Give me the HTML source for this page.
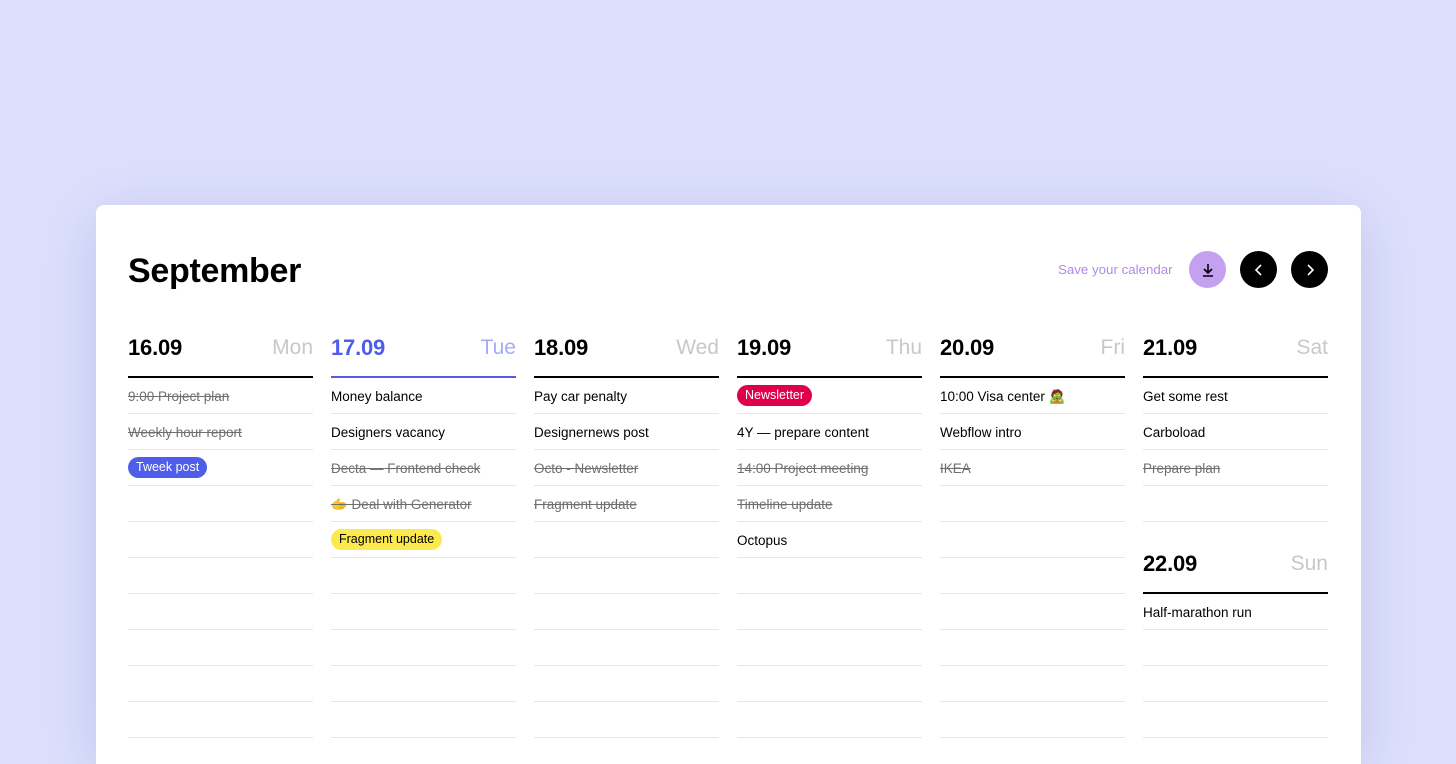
<!DOCTYPE html>
<html><head><meta charset="utf-8"><style>
*{margin:0;padding:0;box-sizing:border-box}
html,body{width:1456px;height:764px;overflow:hidden}
body{background:#dde0fc;font-family:"Liberation Sans",Arial,sans-serif;position:relative}
.card{position:absolute;left:96px;top:205px;width:1265px;height:559px;background:#fff;border-radius:8px 8px 0 0;box-shadow:0 10px 60px rgba(120,125,200,0.28)}
h1{position:absolute;left:128px;top:251px;font-size:34px;font-weight:700;letter-spacing:-0.3px;color:#000;line-height:40px}
.save{position:absolute;left:1058px;top:262px;font-size:13.3px;color:#b08ce6;line-height:16px}
.btn{position:absolute;top:251px;width:37px;height:37px;border-radius:50%;background:#000;display:flex;align-items:center;justify-content:center}
.col{position:absolute;width:185px}
.hd{height:48px;border-bottom:2px solid #000;position:relative}
.hd .d{position:absolute;left:0;top:5px;font-size:22px;font-weight:700;letter-spacing:-0.2px;line-height:26px}
.hd .w{position:absolute;right:0;top:5px;font-size:21px;color:#c8c8c8;line-height:26px}
.r{height:36px;border-bottom:1px solid #e6e6e6;font-size:13.5px;line-height:38px;color:#000;white-space:nowrap}
.s{color:#6f6f6f;text-decoration:line-through}
.p{display:inline-block;height:21px;line-height:21px;padding:0 8px;border-radius:11px;font-size:12.5px;vertical-align:middle;margin-top:-3px}
</style></head><body>
<div class="card"></div>
<h1>September</h1>
<div class="save">Save your calendar</div>
<div class="btn" style="left:1189px;background:#c3a1f0"><svg width="16" height="16" viewBox="0 0 16 16"><path d="M8 2v9M4 7l4 4 4-4M3 14h10" stroke="#000" stroke-width="1.6" fill="none"/></svg></div>
<div class="btn" style="left:1240px"><svg width="14" height="14" viewBox="0 0 14 14"><path d="M9 2L4 7l5 5" stroke="#fff" stroke-width="1.6" fill="none"/></svg></div>
<div class="btn" style="left:1291px"><svg width="14" height="14" viewBox="0 0 14 14"><path d="M5 2l5 5-5 5" stroke="#fff" stroke-width="1.6" fill="none"/></svg></div>

<div class="col" style="left:128px;top:330px">
<div class="hd"><span class="d">16.09</span><span class="w">Mon</span></div>
<div class="r s">9:00 Project plan</div><div class="r s">Weekly hour report</div>
<div class="r"><span class="p" style="background:#4f5deb;color:#fff">Tweek post</span></div>
<div class="r"></div><div class="r"></div><div class="r"></div><div class="r"></div><div class="r"></div><div class="r"></div><div class="r"></div><div class="r"></div>
</div>
<div class="col" style="left:331px;top:330px">
<div class="hd" style="border-color:#4f5deb"><span class="d" style="color:#4f5deb">17.09</span><span class="w" style="color:#a3acf5">Tue</span></div>
<div class="r">Money balance</div><div class="r">Designers vacancy</div>
<div class="r s">Decta — Frontend check</div><div class="r s">🫱 Deal with Generator</div>
<div class="r"><span class="p" style="background:#fbe94e;color:#000">Fragment update</span></div>
<div class="r"></div><div class="r"></div><div class="r"></div><div class="r"></div><div class="r"></div><div class="r"></div>
</div>
<div class="col" style="left:534px;top:330px">
<div class="hd"><span class="d">18.09</span><span class="w">Wed</span></div>
<div class="r">Pay car penalty</div><div class="r">Designernews post</div>
<div class="r s">Octo - Newsletter</div><div class="r s">Fragment update</div>
<div class="r"></div><div class="r"></div><div class="r"></div><div class="r"></div><div class="r"></div><div class="r"></div><div class="r"></div>
</div>
<div class="col" style="left:737px;top:330px">
<div class="hd"><span class="d">19.09</span><span class="w">Thu</span></div>
<div class="r"><span class="p" style="background:#e0004a;color:#fff">Newsletter</span></div>
<div class="r">4Y — prepare content</div><div class="r s">14:00 Project meeting</div><div class="r s">Timeline update</div><div class="r">Octopus</div>
<div class="r"></div><div class="r"></div><div class="r"></div><div class="r"></div><div class="r"></div><div class="r"></div>
</div>
<div class="col" style="left:940px;top:330px">
<div class="hd"><span class="d">20.09</span><span class="w">Fri</span></div>
<div class="r">10:00 Visa center 🧟</div><div class="r">Webflow intro</div><div class="r s">IKEA</div>
<div class="r"></div><div class="r"></div><div class="r"></div><div class="r"></div><div class="r"></div><div class="r"></div><div class="r"></div><div class="r"></div>
</div>
<div class="col" style="left:1143px;top:330px">
<div class="hd"><span class="d">21.09</span><span class="w">Sat</span></div>
<div class="r">Get some rest</div><div class="r">Carboload</div><div class="r s">Prepare plan</div><div class="r"></div>
</div>
<div class="col" style="left:1143px;top:546px">
<div class="hd"><span class="d">22.09</span><span class="w">Sun</span></div>
<div class="r">Half-marathon run</div><div class="r"></div><div class="r"></div><div class="r"></div><div class="r"></div>
</div>
</body></html>
